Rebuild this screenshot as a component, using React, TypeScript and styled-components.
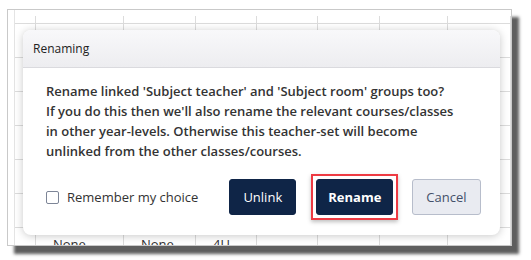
import React from 'react'
import styled, { createGlobalStyle } from 'styled-components'

const GlobalStyle = createGlobalStyle`
  body {
    margin: 0;
    background: #ffffff;
    font-family: 'Open Sans', 'Noto Sans', sans-serif;
  }
`

const StyledPage = styled.div`
  width: 531px;
  height: 260px;
  padding: 9px 0 0 7px;
  box-sizing: border-box;
  overflow: hidden;
`

const StyledFrame = styled.div`
  position: relative;
  width: 503px;
  height: 235px;
  border: 1px solid #c9c9c9;
  background: #ffffff;
  box-shadow: 7px 8px 3px rgba(40, 40, 40, 0.75);
`

const StyledTable = styled.div`
  margin-left: 6px;
  height: 100%;
  overflow: hidden;
  border-left: 1px solid #e4e4e4;
`

const StyledRow = styled.div<{ $head?: boolean }>`
  display: grid;
  grid-template-columns: 21px 88px 72px 61px 61px 62px 68px 1fr;
  height: ${(p) => (p.$head ? '14px' : '34px')};
  border-bottom: 1px solid #dcdcdc;
  box-sizing: border-box;
`

const StyledCell = styled.div<{ $head?: boolean }>`
  border-right: 1px solid #dcdcdc;
  margin-top: ${(p) => (p.$head ? '6px' : '0')};
  padding: 7px 0 0 17px;
  font-size: 13px;
  color: #333333;
  overflow: hidden;
  white-space: nowrap;
`

const StyledDialog = styled.div`
  position: absolute;
  left: 15px;
  top: 20px;
  width: 477px;
  height: 205px;
  background: #ffffff;
  border-radius: 8px;
  box-shadow: 0 1px 8px rgba(0, 0, 0, 0.22);
  overflow: hidden;
  display: flex;
  flex-direction: column;
`

const StyledHeader = styled.div`
  height: 38px;
  flex-shrink: 0;
  padding-left: 10px;
  display: flex;
  align-items: center;
  background: linear-gradient(#f8f8fa, #ededf0);
  border-bottom: 1px solid #dadade;
  font-size: 12px;
  color: #222222;
  box-sizing: border-box;
`

const StyledBody = styled.p`
  margin: 0;
  padding: 13px 23px 0 23px;
  font-size: 13px;
  font-weight: 600;
  line-height: 20px;
  color: #333333;
`

const StyledFooter = styled.div`
  display: flex;
  align-items: center;
  padding: 13px 0 0 23px;
`

const StyledCheckLabel = styled.label`
  display: flex;
  align-items: center;
  gap: 8px;
  margin-right: 31px;
  font-size: 13px;
  font-weight: 500;
  color: #333333;
  white-space: nowrap;
`

const StyledBox = styled.span`
  width: 11px;
  height: 11px;
  border: 1px solid #7d8597;
  border-radius: 2px;
  background: #ffffff;
`

const StyledButton = styled.button<{ $variant: 'dark' | 'light'; $bold?: boolean }>`
  height: 36px;
  padding: 0 ${(p) => (p.$bold ? '11px' : '13px')};
  border-radius: 3px;
  font-family: inherit;
  font-size: 13px;
  white-space: nowrap;
  border: 1px solid ${(p) => (p.$variant === 'dark' ? '#0f2547' : '#b7bdcb')};
  background: ${(p) => (p.$variant === 'dark' ? '#0f2547' : '#e9ebf1')};
  color: ${(p) => (p.$variant === 'dark' ? '#ffffff' : '#44506a')};
  font-weight: ${(p) => (p.$variant === 'light' ? 400 : p.$bold ? 700 : 500)};
`

const StyledHighlight = styled.div`
  margin: 0 14px 0 15px;
  padding: 3px 3px;
  border: 2px solid #ee3b43;
  box-shadow: 0 2px 4px rgba(0, 0, 0, 0.25);
  display: flex;
`

const columns = 8
const rows = [[], [], [], [], [], [], ['', 'None', 'None', '4U']]

const App: React.FC = () => {
  return (
    <>
      <GlobalStyle />
      <StyledPage>
        <StyledFrame>
          <StyledTable>
            <StyledRow $head>
              {Array.from({ length: columns }).map((_, i) => (
                <StyledCell $head key={i} />
              ))}
            </StyledRow>
            {rows.map((r, ri) => (
              <StyledRow key={ri}>
                {Array.from({ length: columns }).map((_, i) => (
                  <StyledCell key={i}>{r[i] || ''}</StyledCell>
                ))}
              </StyledRow>
            ))}
          </StyledTable>
          <StyledDialog>
            <StyledHeader>Renaming</StyledHeader>
            <StyledBody>
              Rename linked 'Subject teacher' and 'Subject room' groups too?
              <br />
              If you do this then we'll also rename the relevant courses/classes
              <br />
              in other year-levels. Otherwise this teacher-set will become
              <br />
              unlinked from the other classes/courses.
            </StyledBody>
            <StyledFooter>
              <StyledCheckLabel>
                <StyledBox />
                Remember my choice
              </StyledCheckLabel>
              <StyledButton $variant="dark">Unlink</StyledButton>
              <StyledHighlight>
                <StyledButton $variant="dark" $bold>
                  Rename
                </StyledButton>
              </StyledHighlight>
              <StyledButton $variant="light">Cancel</StyledButton>
            </StyledFooter>
          </StyledDialog>
        </StyledFrame>
      </StyledPage>
    </>
  )
}

export default App
